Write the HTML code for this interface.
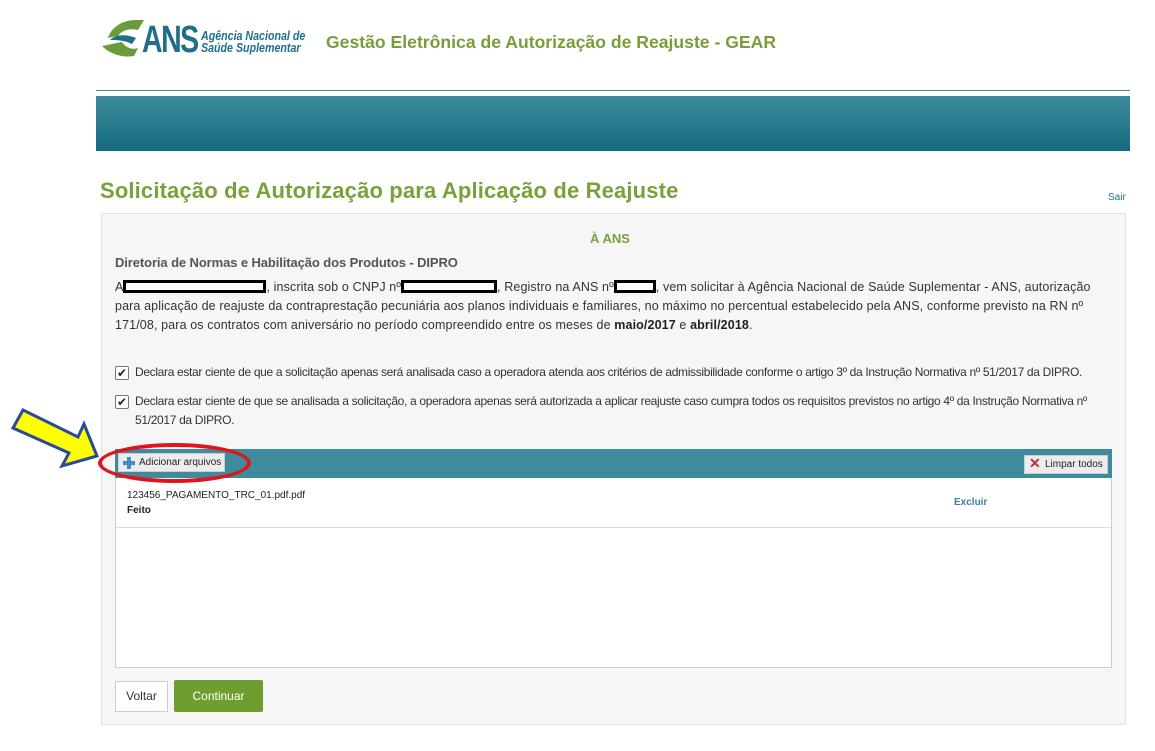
<!DOCTYPE html>
<html><head><meta charset="utf-8"><style>
*{margin:0;padding:0;box-sizing:border-box}
body{width:1155px;height:751px;background:#fff;font-family:"Liberation Sans",Arial,sans-serif;position:relative;overflow:hidden;color:#333}
.a{position:absolute}
.t{font-size:12px;line-height:19px;color:#333;letter-spacing:-0.33px}
.p{font-size:12.5px;line-height:19px;color:#333;white-space:nowrap;letter-spacing:0.12px}
.blk{display:inline-block;width:143px;height:13px;border:2px solid #000;background:#fff;vertical-align:-2px;box-shadow:inset 0 0 0 1px #000}
.cb{position:absolute;width:14px;height:14px;border:1px solid #777;border-radius:2px;background:#fff;font-size:12px;line-height:12px;text-align:center;color:#222}
</style></head><body>
<svg class="a" style="left:100px;top:16px" width="80" height="44" viewBox="0 0 80 44">
<path d="M8 22 C12 10 24 4 36 4 L44 4 L38 14 C30 12 22 14 18 20 Z" fill="#6a9c3c"/>
<path d="M2 30 L22 26 C26 32 32 34 38 32 L34 40 C22 42 10 38 2 30 Z" fill="#6a9c3c"/>
<path d="M10 24 C16 18 26 18 36 22 L32 28 C24 24 16 24 10 24Z" fill="#1f6f8b"/>
</svg>
<div class="a" style="left:142px;top:19px;font-size:38px;font-weight:bold;color:#1f6f8b;letter-spacing:-2px;transform:scaleX(.75);transform-origin:left">ANS</div>
<div class="a" style="left:201px;top:30px;font-size:13px;line-height:12px;color:#1f6f8b;font-style:italic;font-weight:bold;transform:scaleX(.82);transform-origin:left">Agência Nacional de<br>Saúde Suplementar</div>
<div class="a" style="left:326px;top:32px;font-size:17.6px;font-weight:bold;color:#7a9c3a">Gestão Eletrônica de Autorização de Reajuste - GEAR</div>
<div class="a" style="left:96px;top:90px;width:1034px;height:1px;background:#4a8a8f"></div>
<div class="a" style="left:96px;top:96px;width:1034px;height:55px;background:linear-gradient(#3d8c9d,#16697f)"></div>
<div class="a" style="left:100px;top:178px;font-size:22px;font-weight:bold;color:#7aa03a;letter-spacing:0.15px">Solicitação de Autorização para Aplicação de Reajuste</div>
<div class="a" style="left:1108px;top:192px;font-size:10px;color:#1f6f8b">Sair</div>
<div class="a" style="left:101px;top:213px;width:1025px;height:512px;background:#f6f6f6;border:1px solid #e2e2e2"></div>
<div class="a" style="left:590px;top:231px;font-size:13px;font-weight:bold;color:#7aa03a">À ANS</div>
<div class="a" style="left:115px;top:255px;font-size:13px;font-weight:bold;color:#555;letter-spacing:-0.1px">Diretoria de Normas e Habilitação dos Produtos - DIPRO</div>
<div class="a p" style="left:115px;top:278px">
<div>A<span class="blk"></span>, inscrita sob o CNPJ nº<span class="blk" style="width:96px"></span>, Registro na ANS nº<span class="blk" style="width:42px"></span>, vem solicitar à Agência Nacional de Saúde Suplementar - ANS, autorização</div>
<div>para aplicação de reajuste da contraprestação pecuniária aos planos individuais e familiares, no máximo no percentual estabelecido pela ANS, conforme previsto na RN nº</div>
<div>171/08, para os contratos com aniversário no período compreendido entre os meses de <b style="color:#222">maio/2017</b> e <b style="color:#222">abril/2018</b>.</div>
</div>
<div class="cb" style="left:115px;top:366px">✔</div>
<div class="a t" style="left:135px;top:363px">Declara estar ciente de que a solicitação apenas será analisada caso a operadora atenda aos critérios de admissibilidade conforme o artigo 3º da Instrução Normativa nº 51/2017 da DIPRO.</div>
<div class="cb" style="left:115px;top:395px">✔</div>
<div class="a t" style="left:135px;top:392px;width:962px">Declara estar ciente de que se analisada a solicitação, a operadora apenas será autorizada a aplicar reajuste caso cumpra todos os requisitos previstos no artigo 4º da Instrução Normativa nº 51/2017 da DIPRO.</div>
<div class="a" style="left:115px;top:449px;width:997px;height:219px;border:1px solid #ccc;background:#fff"></div>
<div class="a" style="left:115px;top:449px;width:997px;height:29px;background:#3f8a9c"></div>
<div class="a" style="left:118px;top:453px;width:107px;height:19px;background:#ececec;border:1px solid #ccc;font-size:10px;line-height:17px;padding-left:20px;color:#222">Adicionar arquivos</div>
<div class="a" style="left:123px;top:461px;width:12px;height:4px;background:#3d8fc6"></div>
<div class="a" style="left:127px;top:457px;width:4px;height:12px;background:#3d8fc6"></div>
<div class="a" style="left:1024px;top:455px;width:84px;height:19px;background:#ececec;border:1px solid #ccc;font-size:10px;line-height:17px;padding-left:20px;color:#222">Limpar todos</div>
<div class="a" style="left:1029px;top:455px;font-size:14px;color:#c0303a;font-weight:bold">✕</div>
<div class="a" style="left:127px;top:490px;font-size:10px;color:#222">123456_PAGAMENTO_TRC_01.pdf.pdf</div>
<div class="a" style="left:127px;top:505px;font-size:10px;font-weight:bold;color:#222">Feito</div>
<div class="a" style="left:954px;top:497px;font-size:10px;font-weight:bold;color:#3d7fa0">Excluir</div>
<div class="a" style="left:116px;top:527px;width:995px;height:1px;background:#ddd"></div>
<div class="a" style="left:98px;top:443px;width:153px;height:40px;border:4px solid #e0141c;border-radius:50%"></div>
<svg class="a" style="left:0;top:395px" width="110" height="85" viewBox="0 395 110 85">
<polygon points="23,410 78,437 84,424 97,456 62,466 69,453 13,428" fill="#ffff00" stroke="#2a4a9a" stroke-width="3" stroke-linejoin="miter"/>
</svg>
<div class="a" style="left:115px;top:681px;width:53px;height:31px;border:1px solid #ccc;background:#fff;font-size:12px;line-height:29px;text-align:center;color:#333">Voltar</div>
<div class="a" style="left:174px;top:680px;width:89px;height:32px;background:#6f9e2e;border-radius:2px;font-size:12px;line-height:32px;text-align:center;color:#fff">Continuar</div>
</body></html>
